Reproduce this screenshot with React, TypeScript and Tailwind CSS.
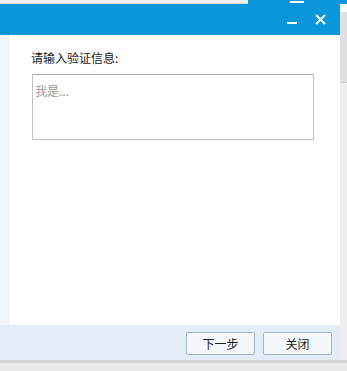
import React from "react";

const font = { fontFamily: '"Microsoft YaHei","Noto Sans CJK SC","Noto Sans",sans-serif' };

export default function App() {
  return (
    <div className="w-[347px] h-[371px] overflow-hidden bg-[#e6e6e6] flex flex-col" style={font}>
      {/* top background strip */}
      <div className="h-[4px] flex shrink-0">
        <div className="w-[248px] bg-[#eef0f2] border-b border-[#d8dadc]" />
        <div className="flex-1 bg-[#0c96da] relative">
          <div className="absolute left-[42px] top-[1px] w-[14px] h-[2px] bg-white" />
        </div>
      </div>
      <div className="flex h-[356px] shrink-0">
        {/* dialog */}
        <div className="w-[340px] flex flex-col">
          <div className="h-[31px] bg-[#0c96da] flex items-center justify-end pr-[14px] gap-[18px]">
            <div className="w-[10px] h-[2px] bg-white mt-[6px]" />
            <svg width="11" height="11" viewBox="0 0 11 11" className="mb-[1px]">
              <path d="M1 1 L10 10 M10 1 L1 10" stroke="white" strokeWidth="2" />
            </svg>
          </div>
          <div className="h-[290px] flex bg-white">
            <div className="w-[10px] bg-[#f2f6fb]" />
            <div className="flex-1 pl-[21px] pt-[15px]">
              <div className="text-[12px] leading-[16px] text-[#222]">请输入验证信息:</div>
              <div className="mt-[8px] ml-[1px] w-[282px] h-[66px] border border-[#c3c3c3] border-t-[#a9a9a9] bg-white px-[2px] pt-[2px]">
                <span className="text-[12px] leading-[16px] text-[#9a9a9a]">我是...</span>
              </div>
            </div>
          </div>
          <div className="h-[35px] bg-[#e3edf8] flex items-start justify-end pt-[7px] pr-[8px] gap-[8px]">
            <div className="w-[69px] h-[23px] rounded-[2px] border border-[#9fb4c6] bg-[#f5f8fb] flex items-center justify-center text-[12px] text-[#222]">
              下一步
            </div>
            <div className="w-[69px] h-[23px] rounded-[2px] border border-[#9fb4c6] bg-[#f5f8fb] flex items-center justify-center text-[12px] text-[#222]">
              关闭
            </div>
          </div>
        </div>
        {/* right strip */}
        <div className="flex-1 flex flex-col">
          <div className="h-[8px] bg-white" />
          <div className="h-[71px] bg-[#e0e0e0] border-b border-[#cccccc]" />
          <div className="flex-1 bg-[#eeeeee]" />
        </div>
      </div>
      <div className="h-[3px] bg-[#d2d2d2] shrink-0" />
      <div className="flex-1 bg-[#e8e8e8]" />
    </div>
  );
}
